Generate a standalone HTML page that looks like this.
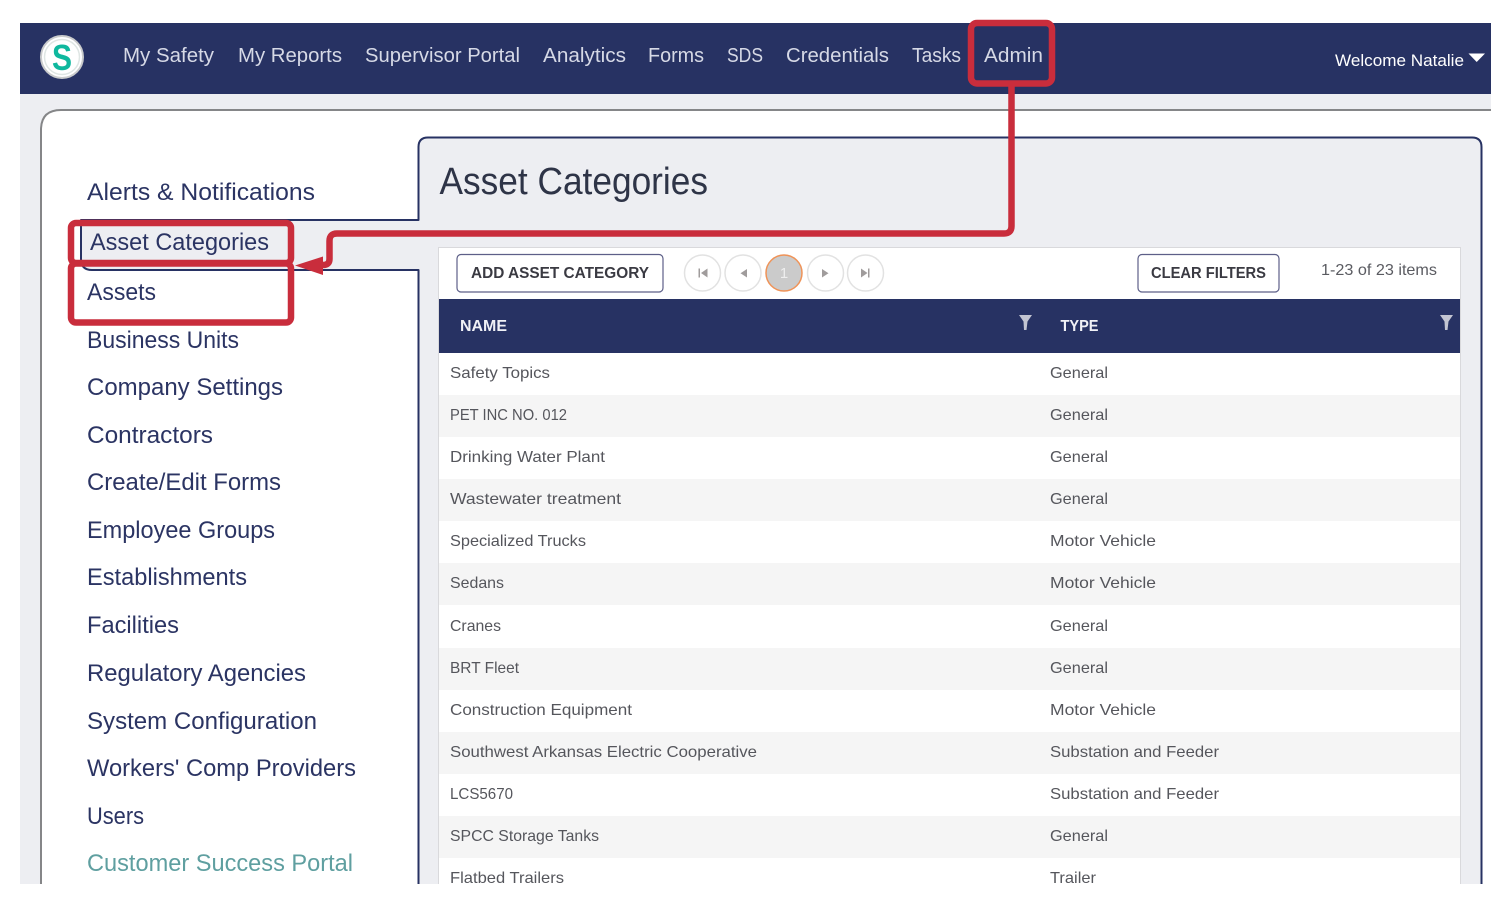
<!DOCTYPE html>
<html><head><meta charset="utf-8"><title>Asset Categories</title>
<style>
html,body{margin:0;padding:0;background:#fff;width:1511px;height:903px;overflow:hidden}
svg{display:block}
text{font-family:"Liberation Sans",sans-serif;white-space:pre}
.nav{font-size:20px;fill:#d6d9e6}
.side{font-size:24px;fill:#2b3463}
.cell{font-size:16px;fill:#55565c}
.hd{font-size:16px;fill:#f0f1f6;font-weight:bold}
.btn{font-size:16px;fill:#3a3a42;font-weight:bold}
</style></head><body>
<svg width="1511" height="903" viewBox="0 0 1511 903" xmlns="http://www.w3.org/2000/svg">
<defs><clipPath id="c"><rect x="20" y="23" width="1471" height="861"/></clipPath></defs>
<g clip-path="url(#c)">
<rect x="20" y="23" width="1471" height="861" fill="#edeef2"/>
<!-- nav -->
<rect x="20" y="23" width="1471" height="71" fill="#273263"/>
<circle cx="62" cy="57" r="21" fill="#fff" stroke="#c9cbcc" stroke-width="2"/>
<circle cx="62" cy="57" r="17.5" fill="#fff" stroke="#dfe6e4" stroke-width="1.5"/>
<text x="52" y="70" font-size="36" font-weight="bold" fill="#0fb89e" textLength="20" lengthAdjust="spacingAndGlyphs">S</text>
<text class="nav" x="123" y="62" textLength="91" lengthAdjust="spacingAndGlyphs">My Safety</text>
<text class="nav" x="238" y="62" textLength="104" lengthAdjust="spacingAndGlyphs">My Reports</text>
<text class="nav" x="365" y="62" textLength="155" lengthAdjust="spacingAndGlyphs">Supervisor Portal</text>
<text class="nav" x="543" y="62" textLength="83" lengthAdjust="spacingAndGlyphs">Analytics</text>
<text class="nav" x="648" y="62" textLength="56" lengthAdjust="spacingAndGlyphs">Forms</text>
<text class="nav" x="727" y="62" textLength="36" lengthAdjust="spacingAndGlyphs">SDS</text>
<text class="nav" x="786" y="62" textLength="103" lengthAdjust="spacingAndGlyphs">Credentials</text>
<text class="nav" x="912" y="62" textLength="49" lengthAdjust="spacingAndGlyphs">Tasks</text>
<text class="nav" x="984" y="62" textLength="59" lengthAdjust="spacingAndGlyphs">Admin</text>
<text x="1335" y="66" font-size="17" fill="#fff" textLength="129" lengthAdjust="spacingAndGlyphs">Welcome Natalie</text>
<path d="M1468.500 53.500H1485L1476.700 62Z" fill="#fff"/>
<!-- outer panel -->
<path d="M41 895V130Q41 110 61 110H1500V895Z" fill="#fff" stroke="#858688" stroke-width="2"/>
<!-- content panel with tab -->
<path d="M418.500 147Q418.500 137.500 428 137.500H1472Q1481.500 137.500 1481.500 147V895H418.500V270H92Q81 270 81 259V220H418.500Z" fill="#edeef2" stroke="#273263" stroke-width="2" stroke-linejoin="round"/>
<text x="439.500" y="194" font-size="38" fill="#2e3447" textLength="268.500" lengthAdjust="spacingAndGlyphs">Asset Categories</text>
<!-- sidebar -->
<text class="side" x="87" y="200" textLength="228" lengthAdjust="spacingAndGlyphs">Alerts &amp; Notifications</text>
<text class="side" x="90" y="250" textLength="179" lengthAdjust="spacingAndGlyphs">Asset Categories</text>
<text class="side" x="87" y="300" textLength="69" lengthAdjust="spacingAndGlyphs">Assets</text>
<text class="side" x="87" y="348" textLength="152" lengthAdjust="spacingAndGlyphs">Business Units</text>
<text class="side" x="87" y="395" textLength="196" lengthAdjust="spacingAndGlyphs">Company Settings</text>
<text class="side" x="87" y="443" textLength="126" lengthAdjust="spacingAndGlyphs">Contractors</text>
<text class="side" x="87" y="490" textLength="194" lengthAdjust="spacingAndGlyphs">Create/Edit Forms</text>
<text class="side" x="87" y="538" textLength="188" lengthAdjust="spacingAndGlyphs">Employee Groups</text>
<text class="side" x="87" y="585" textLength="160" lengthAdjust="spacingAndGlyphs">Establishments</text>
<text class="side" x="87" y="633" textLength="92" lengthAdjust="spacingAndGlyphs">Facilities</text>
<text class="side" x="87" y="681" textLength="219" lengthAdjust="spacingAndGlyphs">Regulatory Agencies</text>
<text class="side" x="87" y="729" textLength="230" lengthAdjust="spacingAndGlyphs">System Configuration</text>
<text class="side" x="87" y="776" textLength="269" lengthAdjust="spacingAndGlyphs">Workers' Comp Providers</text>
<text class="side" x="87" y="824" textLength="57" lengthAdjust="spacingAndGlyphs">Users</text>
<text class="side" x="87" y="871" textLength="266" lengthAdjust="spacingAndGlyphs" style="fill:#5f9fa0">Customer Success Portal</text>
<!-- grid -->
<rect x="438.500" y="247.500" width="1022" height="650" fill="#fff" stroke="#d9d9dc"/>
<rect x="457" y="254.500" width="206" height="37.500" rx="4" fill="#fff" stroke="#5d5f88" stroke-width="1.200"/>
<text class="btn" x="471" y="278" textLength="178" lengthAdjust="spacingAndGlyphs">ADD ASSET CATEGORY</text>
<rect x="1138" y="254.500" width="141" height="37.500" rx="4" fill="#fff" stroke="#5d5f88" stroke-width="1.200"/>
<text class="btn" x="1151" y="278" textLength="115" lengthAdjust="spacingAndGlyphs">CLEAR FILTERS</text>
<text x="1321" y="275" font-size="16" fill="#5a5b61" textLength="116" lengthAdjust="spacingAndGlyphs">1-23 of 23 items</text>
<g fill="#fff" stroke="#e2e2e2" stroke-width="1.500">
<circle cx="702.500" cy="273" r="18"/><circle cx="743" cy="273" r="18"/><circle cx="825.500" cy="273" r="18"/><circle cx="865.500" cy="273" r="18"/>
</g>
<circle cx="784" cy="273" r="18" fill="#cbcbcb" stroke="#ef9358" stroke-width="1.500"/>
<text x="784" y="278" font-size="15" fill="#eeeeee" text-anchor="middle">1</text>
<g fill="#a09c9c">
<path d="M698.500 268.500h1.500v9h-1.500zM707.500 268.500v9l-6.500-4.500z"/>
<path d="M747 269v8.500l-6.500-4.250z"/>
<path d="M822 269v8.500l6.500-4.250z"/>
<path d="M861 268.500v9l6.500-4.500zM868 268.500h1.500v9h-1.500z"/>
</g>
<rect x="439" y="299" width="1021" height="54" fill="#273263"/>
<text class="hd" x="460" y="331" textLength="47" lengthAdjust="spacingAndGlyphs">NAME</text>
<text class="hd" x="1060.500" y="331" textLength="38" lengthAdjust="spacingAndGlyphs">TYPE</text>
<path d="M1019 315h13l-4.500 6.500l-1 8.500h-2.500l-0.500-8.500z" fill="#c3c5d2"/>
<path d="M1440 315h13l-4.500 6.500l-1 8.500h-2.500l-0.500-8.500z" fill="#c3c5d2"/>
<g fill="#f5f5f5">
<rect x="439" y="395" width="1021" height="42"/><rect x="439" y="479" width="1021" height="42"/><rect x="439" y="563" width="1021" height="42"/><rect x="439" y="648" width="1021" height="42"/><rect x="439" y="732" width="1021" height="42"/><rect x="439" y="816" width="1021" height="42"/>
</g>
<text class="cell" x="450" y="378" textLength="100" lengthAdjust="spacingAndGlyphs">Safety Topics</text>
<text class="cell" x="1050" y="378" textLength="58" lengthAdjust="spacingAndGlyphs">General</text>
<text class="cell" x="450" y="420" textLength="117" lengthAdjust="spacingAndGlyphs">PET INC NO. 012</text>
<text class="cell" x="1050" y="420" textLength="58" lengthAdjust="spacingAndGlyphs">General</text>
<text class="cell" x="450" y="462" textLength="155" lengthAdjust="spacingAndGlyphs">Drinking Water Plant</text>
<text class="cell" x="1050" y="462" textLength="58" lengthAdjust="spacingAndGlyphs">General</text>
<text class="cell" x="450" y="504" textLength="171" lengthAdjust="spacingAndGlyphs">Wastewater treatment</text>
<text class="cell" x="1050" y="504" textLength="58" lengthAdjust="spacingAndGlyphs">General</text>
<text class="cell" x="450" y="546" textLength="136" lengthAdjust="spacingAndGlyphs">Specialized Trucks</text>
<text class="cell" x="1050" y="546" textLength="106" lengthAdjust="spacingAndGlyphs">Motor Vehicle</text>
<text class="cell" x="450" y="588" textLength="54" lengthAdjust="spacingAndGlyphs">Sedans</text>
<text class="cell" x="1050" y="588" textLength="106" lengthAdjust="spacingAndGlyphs">Motor Vehicle</text>
<text class="cell" x="450" y="631" textLength="51" lengthAdjust="spacingAndGlyphs">Cranes</text>
<text class="cell" x="1050" y="631" textLength="58" lengthAdjust="spacingAndGlyphs">General</text>
<text class="cell" x="450" y="673" textLength="69" lengthAdjust="spacingAndGlyphs">BRT Fleet</text>
<text class="cell" x="1050" y="673" textLength="58" lengthAdjust="spacingAndGlyphs">General</text>
<text class="cell" x="450" y="715" textLength="182" lengthAdjust="spacingAndGlyphs">Construction Equipment</text>
<text class="cell" x="1050" y="715" textLength="106" lengthAdjust="spacingAndGlyphs">Motor Vehicle</text>
<text class="cell" x="450" y="757" textLength="307" lengthAdjust="spacingAndGlyphs">Southwest Arkansas Electric Cooperative</text>
<text class="cell" x="1050" y="757" textLength="169" lengthAdjust="spacingAndGlyphs">Substation and Feeder</text>
<text class="cell" x="450" y="799" textLength="63" lengthAdjust="spacingAndGlyphs">LCS5670</text>
<text class="cell" x="1050" y="799" textLength="169" lengthAdjust="spacingAndGlyphs">Substation and Feeder</text>
<text class="cell" x="450" y="841" textLength="149" lengthAdjust="spacingAndGlyphs">SPCC Storage Tanks</text>
<text class="cell" x="1050" y="841" textLength="58" lengthAdjust="spacingAndGlyphs">General</text>
<text class="cell" x="450" y="883" textLength="114" lengthAdjust="spacingAndGlyphs">Flatbed Trailers</text>
<text class="cell" x="1050" y="883" textLength="46" lengthAdjust="spacingAndGlyphs">Trailer</text>
</g>
<!-- red annotations -->
<g fill="none" stroke="#c92d3c" stroke-width="6.500" stroke-linejoin="round">
<rect x="971" y="23" width="81" height="60.500" rx="6"/>
<rect x="71" y="223" width="220" height="40" rx="5"/>
<rect x="71" y="263.500" width="220" height="59" rx="5"/>
<path d="M1011.500 86V226Q1011.500 233.500 1004 233.500H337Q329.500 233.500 329.500 241V259Q329.500 265 323 265H318"/>
</g>
<path d="M295 265.500L323 256.500V275Z" fill="#c92d3c"/>
</svg>
</body></html>
